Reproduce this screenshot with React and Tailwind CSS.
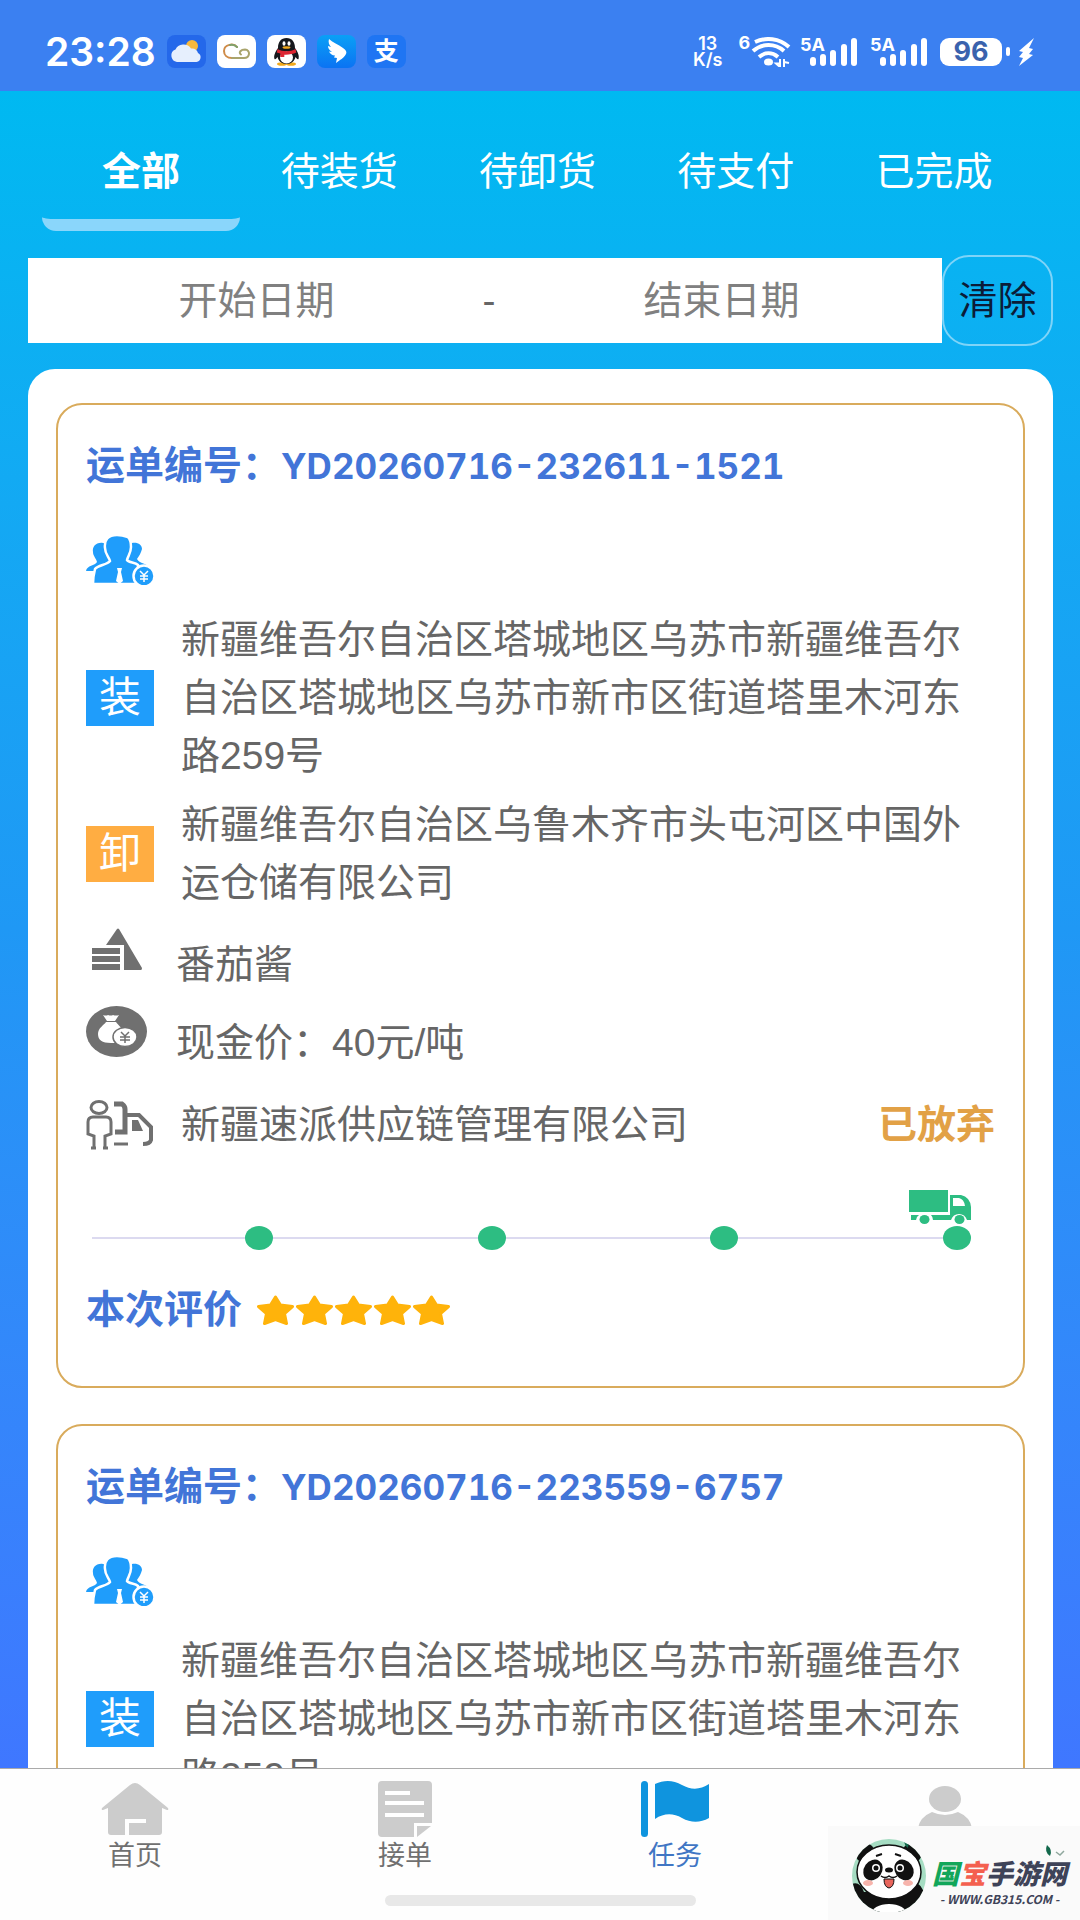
import { useState } from 'react'

const tabs = ['全部', '待装货', '待卸货', '待支付', '已完成']

const orders = [
  {
    id: 'YD20260716-232611-1521',
    from: '新疆维吾尔自治区塔城地区乌苏市新疆维吾尔自治区塔城地区乌苏市新市区街道塔里木河东路259号',
    to: '新疆维吾尔自治区乌鲁木齐市头屯河区中国外运仓储有限公司',
    goods: '番茄酱',
    price: '40元/吨',
    company: '新疆速派供应链管理有限公司',
    status: '已放弃',
    stars: 5,
  },
  {
    id: 'YD20260716-223559-6757',
    from: '新疆维吾尔自治区塔城地区乌苏市新疆维吾尔自治区塔城地区乌苏市新市区街道塔里木河东路259号',
  },
]

const WeatherApp = () => (
  <svg className="w-[39px] h-[33px]" viewBox="0 0 39 33" aria-hidden="true">
    <rect width="39" height="33" rx="8" fill="#2468ea" />
    <circle cx="25" cy="11" r="6" fill="#f9b93c" />
    <path d="M10 27a6.500 6.500 0 0 1-1.500-12.500 8.500 7.500 0 0 1 15.500-1 6.500 6.500 0 0 1 7 4.500 4.800 4.800 0 0 1-1.500 9z" fill="#e6effd" />
  </svg>
)

const CloudApp = () => (
  <svg className="w-[39px] h-[33px]" viewBox="0 0 39 33" fill="none" strokeWidth="2" strokeLinecap="round" aria-hidden="true">
    <rect width="39" height="33" rx="8" fill="#fff" />
    <path d="M20 12c-3-4-13-3-13 4 0 4 3 7 8 7" stroke="#cf8b48" />
    <path d="M15 23h12c6 0 7-8 1-8.500-4 0-7 3-4 5" stroke="#a9a46c" />
    <path d="M20 12c-2-2-5-2.500-7-2" stroke="#7fa26c" />
  </svg>
)

const PenguinApp = () => (
  <svg className="w-[39px] h-[33px]" viewBox="0 0 39 33" aria-hidden="true">
    <rect width="39" height="33" rx="8" fill="#fff" />
    <ellipse cx="15" cy="29" rx="5" ry="1.800" fill="#f2a91c" />
    <ellipse cx="24" cy="29" rx="5" ry="1.800" fill="#f2a91c" />
    <path d="M19.500 3c-5.500 0-8.500 4-8.500 10-3 4-4.500 8-3.500 11 1 1 2-1 3-2 1 4 4 7 9 7s8-3 9-7c1 1 2 3 3 2 1-3-.5-7-3.500-11 0-6-3-10-8.500-10z" fill="#15171c" />
    <ellipse cx="19.500" cy="22.500" rx="6.500" ry="6" fill="#fff" />
    <ellipse cx="17" cy="8.500" rx="1.500" ry="2.200" fill="#fff" />
    <ellipse cx="22" cy="8.500" rx="1.500" ry="2.200" fill="#fff" />
    <ellipse cx="19.500" cy="12.500" rx="4" ry="1.300" fill="#f2a91c" />
    <path d="M10.500 14c5 3 13 3 18 0l.8 3.500c-3 1.500-8 2.500-12 2.200V22h-4v-3.500l-3.500-1z" fill="#dc2532" />
  </svg>
)

const BirdApp = () => (
  <svg className="w-[39px] h-[33px]" viewBox="0 0 39 33" aria-hidden="true">
    <defs>
      <linearGradient id="bird" x1="0" y1="0" x2="0" y2="1">
        <stop offset="0" stopColor="#0aa0f6" />
        <stop offset="1" stopColor="#0b73f3" />
      </linearGradient>
    </defs>
    <rect width="39" height="33" rx="8" fill="url(#bird)" />
    <path d="M12 4c4 4 9 5 14 9 3 2 4 4 3 6-1 2-4 5-6 6l-4 3 1-5-3-.5 1-2c-3 0-5-2-6-4l3 .5c-3-2-4-4-4-6l3 1c-2-2-3-5-2-8z" fill="#fff" />
  </svg>
)

const PayApp = () => (
  <span className="w-[39px] h-[33px] rounded-lg bg-[#1f75f3] flex items-center justify-center text-[25px] leading-none font-bold">
    支
  </span>
)

const Wifi = () => (
  <svg className="w-[42px] h-[30px]" viewBox="0 0 42 30" fill="none" stroke="#fff" strokeWidth="4" aria-hidden="true">
    <path d="M5 5c11-5 24-4 34 5" />
    <path d="M3 14c9-8 22-8 31 0" />
    <path d="M9 20c6-5 13-5 19 0" />
    <ellipse cx="18.500" cy="25" rx="4.500" ry="3.500" fill="#fff" stroke="none" />
    <path d="M30 22v8l-4-3.500h4M34 30v-8M34 25l5 1" strokeWidth="2" />
  </svg>
)

const Signal = () => (
  <span className="flex items-end">
    <span className="self-start text-[18px] leading-[14px] font-bold">5A</span>
    <svg className="w-[48px] h-[28px] -ml-[15px]" viewBox="0 0 48 28" fill="#fff" aria-hidden="true">
      <rect x="0" y="19" width="6" height="9" rx="3" />
      <rect x="10" y="16" width="6" height="12" rx="3" />
      <rect x="20" y="12" width="6" height="16" rx="3" />
      <rect x="31" y="6" width="6" height="22" rx="3" />
      <rect x="41" y="0" width="6" height="28" rx="3" />
    </svg>
  </span>
)

const StatusBar = () => (
  <div className="flex shrink-0 items-center justify-between h-[91px] pl-[45px] pr-[46px] pt-3 bg-[#3b80f1] text-white font-['Inter','Noto_Sans_CJK_SC',sans-serif]">
    <div className="flex items-center gap-[11px]">
      <span className="text-[39px] leading-none font-semibold">23:28</span>
      <WeatherApp />
      <CloudApp />
      <PenguinApp />
      <BirdApp />
      <PayApp />
    </div>
    <div className="flex items-center">
      <span className="flex flex-col items-center text-[18px] leading-4 font-semibold mr-4">
        <span>13</span>
        <span>K/s</span>
      </span>
      <span className="self-start text-[18px] leading-[14px] font-bold">6</span>
      <Wifi />
      <span className="flex gap-3 ml-2">
        <Signal />
        <Signal />
      </span>
      <span className="flex items-center justify-center w-[62px] h-[28px] ml-3 rounded-[9px] bg-white text-[#3a62ad] text-[27px] leading-none font-bold">
        96
      </span>
      <span className="w-1 h-[9px] ml-1 rounded-sm bg-white" />
      <svg className="w-4 h-[28px] ml-2" viewBox="0 0 16 28" fill="#fff" aria-hidden="true">
        <path d="M16 0 1 13l4 1-4 5 4 1-4 8 14-11-4-1 4-5-4-1z" />
      </svg>
    </div>
  </div>
)

const PeopleIcon = () => (
  <svg className="w-[68px] h-[50px]" viewBox="0 0 68 50" fill="#1f9dfb" aria-hidden="true">
    <path d="M17 8c-7-1-11 4-10 9 0 4 3 6 4 10-2 4-10 3-11 9h20l8-8V12z" />
    <path d="M46 8c6-1 10 2 10 6-1 4-3 7-5 10 2 5 11 4 12 9H44l-8-8V12z" />
    <path
      d="M31 0C22 0 18 5 19 13c0 6 4 9 5 13-3 4-12 4-15 8-1 4-2 9-2 15h45V30c-3-3-9-2-11-5 1-4 4-7 4-13 0-4 0-7-3-10-3-1-6-2-11-2z"
      stroke="#fff"
      strokeWidth="2.500"
    />
    <path d="M31 33h5l-1 4 2 9-3.500 3-3.500-3 2-9z" fill="#fff" />
    <circle cx="58" cy="41" r="10.500" stroke="#fff" strokeWidth="2.500" />
    <path d="m54 36 4 4 4-4M54 41h8M54 44h8M58 40v7" fill="none" stroke="#fff" strokeWidth="1.500" />
  </svg>
)

const GoodsIcon = () => (
  <svg className="w-[50px] h-[42px]" viewBox="0 0 50 42" fill="#707070" aria-hidden="true">
    <path d="M25 1q1-1 2 0l23 39q0 2-1 2H32V17H14z" />
    <path d="M0 20h28v6H0zM0 28h28v6H0zM0 36h28v6H0z" />
  </svg>
)

const MoneyIcon = () => (
  <svg className="w-[61px] h-[51px]" viewBox="0 0 61 51" aria-hidden="true">
    <ellipse cx="30.500" cy="25.500" rx="30.500" ry="25.500" fill="#707070" />
    <path d="M17 9q3 1 5 0 3 1 5 0 3 1 6 0l-4 6h-8z" fill="#fff" />
    <path d="M20 16h10c2 3 8 7 9 14s-6 7-14 7c-9 0-13-3-13-9s6-9 8-12z" fill="#fff" />
    <ellipse cx="39" cy="31" rx="12" ry="9.500" fill="#fff" stroke="#707070" strokeWidth="1.500" />
    <path d="m35 26 4 4 4-4M34 31h10M34 34h10M39 30v7" fill="none" stroke="#707070" strokeWidth="1.500" />
  </svg>
)

const CarrierIcon = () => (
  <svg className="w-[68px] h-[50px]" viewBox="0 0 68 50" fill="none" stroke="#707070" strokeWidth="3" aria-hidden="true">
    <ellipse cx="13" cy="7.500" rx="8" ry="6" />
    <path d="M8 49V36l-6-2V22q0-5 5-5h13q5 0 5 5v12l-6 2v13M5 48h5M17 48h5" />
    <path d="M28 4h8q3 2 3 5v23h-10" strokeWidth="5" />
    <path d="M41 15h12l12 12v13q-1 4-8 4" strokeWidth="4" />
    <path d="M46 20h6l5 11h-11z" fill="#707070" stroke="none" />
    <path d="M28 44h14" />
  </svg>
)

const TruckIcon = () => (
  <svg className="w-[62px] h-[34px]" viewBox="0 0 62 34" fill="#2dbd82" aria-hidden="true">
    <path d="M0 0h39v22H0zM2 25h8q-3 2-3 5H2zM22 25h19V5h11q9 2 10 12v13h-4q-2-6-8-6t-8 6H24q0-3-2-5z" />
    <path d="M44 8h6q5 1 6 8H44z" fill="#fff" />
    <ellipse cx="15.500" cy="29.500" rx="5" ry="4.500" />
    <ellipse cx="50.500" cy="29.500" rx="5" ry="4.500" />
  </svg>
)

const Star = () => (
  <svg className="w-[39px] h-[30px]" viewBox="0 0 39 30" aria-hidden="true">
    <path
      d="m19.500 2 5 8 12 1.500-8 7 2 10-11-4-11 4 2-10-8-7 12-1.500z"
      fill="#ffb30a"
      stroke="#ffb30a"
      strokeWidth="3"
      strokeLinejoin="round"
    />
  </svg>
)

const HomeIcon = () => (
  <svg className="w-[68px] h-[58px]" viewBox="0 0 68 58" fill="#ccc" aria-hidden="true">
    <path d="M29 5q5-4 10 0l28 23q1 2-1 2l-5-2v24q0 3-3 3H28V43h17v-4H24v16H10q-3 0-3-3V28l-5 2q-2 0-1-2z" />
  </svg>
)

const DocIcon = () => (
  <svg className="w-[54px] h-[58px]" viewBox="0 0 54 58" aria-hidden="true">
    <path d="M4 1h46q4 0 4 4v38H36v14H4q-4 0-4-4V5q0-4 4-4z" fill="#ccc" />
    <path d="M39 46h14L39 57z" fill="#ccc" />
    <path d="M7 13h25M7 23h39M7 35h39" stroke="#fff" strokeWidth="4" />
  </svg>
)

const FlagIcon = () => (
  <svg className="w-[68px] h-[58px]" viewBox="0 0 68 58" fill="#0f94de" aria-hidden="true">
    <rect x="0" y="1" width="7" height="56" rx="3.500" />
    <path d="M14 4c9-4 18-4 27 1s18 5 27-1v34c-9 5-18 5-27 0s-18-5-27 1z" />
  </svg>
)

const UserIcon = () => (
  <svg className="w-[54px] h-[58px]" viewBox="0 0 54 58" fill="#ccc" aria-hidden="true">
    <ellipse cx="27" cy="19" rx="16" ry="13" />
    <path d="M14 32q13 6 26 0 12 5 14 16v8H0v-8q2-11 14-16z" />
  </svg>
)

const Panda = () => (
  <svg className="w-[78px] h-[74px]" viewBox="0 0 78 74" aria-hidden="true">
    <defs>
      <clipPath id="panda">
        <circle cx="39" cy="38" r="37" />
      </clipPath>
    </defs>
    <g clipPath="url(#panda)">
      <rect width="78" height="76" fill="#a5dcc2" />
      <path d="M2 46q8-3 12 8h46q-4-10 4-10 8 2 10 12l-8 20H6z" fill="#111" />
      <ellipse cx="39" cy="76" rx="18" ry="10" fill="#fff" />
      <circle cx="15" cy="15" r="10" fill="#111" />
      <circle cx="62" cy="15" r="10" fill="#111" />
      <ellipse cx="39" cy="34" rx="32" ry="27" fill="#fff" stroke="#111" strokeWidth="1.500" />
      <ellipse cx="23" cy="32" rx="9" ry="11" transform="rotate(35 23 32)" fill="#111" />
      <ellipse cx="54" cy="32" rx="9" ry="11" transform="rotate(-35 54 32)" fill="#111" />
      <circle cx="26" cy="30" r="4" fill="#fff" />
      <circle cx="50" cy="30" r="4" fill="#fff" />
      <circle cx="26" cy="30" r="2.500" fill="#111" />
      <circle cx="50" cy="30" r="2.500" fill="#111" />
      <ellipse cx="39" cy="32" rx="4" ry="2.500" fill="#111" />
      <path d="M31 38q4 3 8 0 4 3 8 0" fill="none" stroke="#111" strokeWidth="1.500" />
      <path d="M34 41h10q0 8-5 9-5-1-5-9z" fill="#e8655c" stroke="#111" />
      <ellipse cx="18" cy="45" rx="5" ry="3" fill="#f7b4ac" />
      <ellipse cx="58" cy="45" rx="5" ry="3" fill="#f7b4ac" />
      <path d="m26 18 6-2M45 16l6 2" stroke="#111" strokeWidth="2" />
      <path d="M54 2q6 2 4 8-4-3-4-8z" fill="#12684b" />
    </g>
  </svg>
)

const navItems = [
  { name: 'home', label: '首页', Icon: HomeIcon },
  { name: 'orders', label: '接单', Icon: DocIcon },
  { name: 'tasks', label: '任务', Icon: FlagIcon },
  { name: 'me', Icon: UserIcon },
]

const Address = ({ tag, color, children }) => (
  <div className="flex items-center">
    <span className={`flex shrink-0 items-center justify-center w-[68px] h-[56px] text-[42px] leading-none text-white ${color}`}>{tag}</span>
    <p className="flex-1 ml-[27px]">{children}</p>
  </div>
)

const OrderCard = ({ order }) => (
  <article className="shrink-0 border-2 border-[#d9ab5c] rounded-[26px] pt-8 pb-[47px] px-7">
    <h2 className="font-bold text-[#4275d8]">
      运单编号：<span className="text-[35px] tabular-nums font-['Inter',sans-serif]">{order.id}</span>
    </h2>
    <div className="mt-10 mb-[26px]">
      <PeopleIcon />
    </div>
    <Address tag="装" color="bg-[#1f9dfb]">
      {order.from}
    </Address>
    {order.to && (
      <>
        <div className="mt-[11px]">
          <Address tag="卸" color="bg-[#ffad42]">
            {order.to}
          </Address>
        </div>
        <div className="flex mt-4">
          <span className="w-[90px] pl-1.5">
            <GoodsIcon />
          </span>
          <p className="mt-2">{order.goods}</p>
        </div>
        <div className="flex mt-3">
          <span className="w-[90px]">
            <MoneyIcon />
          </span>
          <p className="mt-2">现金价：{order.price}</p>
        </div>
        <div className="flex items-center mt-6">
          <CarrierIcon />
          <p className="ml-[27px]">{order.company}</p>
          <span className="ml-auto font-bold text-[#e2a146]">{order.status}</span>
        </div>
        <div className="mt-9 pl-1.5 pr-6">
          <div className="flex justify-end">
            <TruckIcon />
          </div>
          <div className="relative grid grid-cols-[181px_1fr_1fr_1fr] items-center h-7 before:absolute before:inset-x-0 before:h-0.5 before:bg-[#dcdaf0]">
            {[0, 1, 2, 3].map((n) => (
              <span key={n} className="relative justify-self-end w-7 h-6 rounded-[50%] bg-[#2dbd82]" />
            ))}
          </div>
        </div>
        <div className="flex items-center mt-[29px]">
          <h3 className="font-bold text-[#4275d8]">本次评价</h3>
          <div className="flex ml-3.5" role="img" aria-label={`${order.stars}星`}>
            {Array.from({ length: order.stars }, (_, n) => (
              <Star key={n} />
            ))}
          </div>
        </div>
      </>
    )}
  </article>
)

const App = () => {
  const [tab, setTab] = useState(0)
  const [start, setStart] = useState('')
  const [end, setEnd] = useState('')

  const clearDates = () => {
    setStart('')
    setEnd('')
  }

  return (
    <div className="relative flex flex-col h-screen overflow-hidden text-[39px] leading-[58px] text-[#666] font-['Liberation_Sans','Noto_Sans_CJK_SC',sans-serif]">
      <StatusBar />

      <main className="flex flex-col flex-1 min-h-0 pl-7 pr-[27px] bg-linear-to-b from-[#00b9f1] via-[#1f98f5] to-[#3f77ff]">
        <nav className="grid grid-cols-5 shrink-0 ml-[14px] mr-5 h-[140px] text-white">
          {tabs.map((name, i) => (
            <button
              key={name}
              type="button"
              onClick={() => setTab(i)}
              className={`pt-[34px] border-b-[12px] ${
                tab === i ? 'font-bold rounded-b-[14px] border-[#8ad6fb]' : 'border-transparent'
              }`}
            >
              {name}
            </button>
          ))}
        </nav>

        <div className="flex items-center shrink-0 mt-6">
          <div className="flex items-center flex-1 min-w-0 h-[85px] pl-2 bg-white">
            <input
              type="text"
              aria-label="开始日期"
              placeholder="开始日期"
              value={start}
              onChange={(e) => setStart(e.target.value)}
              className="flex-1 min-w-0 text-center outline-none placeholder:text-[#808080]"
            />
            <span className="w-6 text-center">-</span>
            <input
              type="text"
              aria-label="结束日期"
              placeholder="结束日期"
              value={end}
              onChange={(e) => setEnd(e.target.value)}
              className="flex-1 min-w-0 text-center outline-none placeholder:text-[#808080]"
            />
          </div>
          <button
            type="button"
            onClick={clearDates}
            className="shrink-0 w-[111px] h-[91px] border-2 border-[#7fd4f8] rounded-[27px] text-[#0b1c38]"
          >
            清除
          </button>
        </div>

        <section className="flex flex-col flex-1 min-h-0 gap-9 mt-[23px] px-7 pt-[34px] overflow-hidden bg-white rounded-t-[27px]">
          {orders.map((order) => (
            <OrderCard key={order.id} order={order} />
          ))}
        </section>
      </main>

      <footer className="shrink-0 h-[152px] pt-[11px] border-t border-[#aaa] bg-[#fefefe]">
        <nav className="grid grid-cols-4">
          {navItems.map(({ name, label, Icon }) => (
            <a
              key={name}
              href={`#${name}`}
              aria-label={label || name}
              className={`flex flex-col items-center text-[27px] leading-9 ${name === 'tasks' ? 'text-[#4076c4]' : 'text-[#707070]'}`}
            >
              <Icon />
              {label && <span>{label}</span>}
            </a>
          ))}
        </nav>
        <div className="w-[311px] h-[11px] mx-auto mt-[21px] rounded-full bg-[#e8e8e8]" />
      </footer>

      <div className="absolute right-0 bottom-0 flex items-center w-[252px] h-[94px] pl-[22px] pt-1 bg-[#fafafa]">
        <Panda />
        <div className="flex flex-col items-center ml-1 pt-4 text-[#3e4358] font-['Noto_Sans_CJK_SC',sans-serif]">
          <div className="flex items-center text-[27px] leading-8 font-black italic">
            <span className="text-[#12a65a]">国</span>
            <span className="text-[#f4604f]">宝</span>
            <span>手游网</span>
          </div>
          <span className="text-[12px] leading-5 font-bold italic">- WWW.GB315.COM -</span>
        </div>
        <svg className="absolute right-3 top-4 w-6 h-4" viewBox="0 0 24 16" aria-hidden="true">
          <path d="M3 3q6 5 3 11-6-4-3-11z" fill="#12684b" />
          <path d="m12 10 4 3 4-4" fill="none" stroke="#8fa79d" strokeWidth="1.500" />
        </svg>
      </div>
    </div>
  )
}

export default App
